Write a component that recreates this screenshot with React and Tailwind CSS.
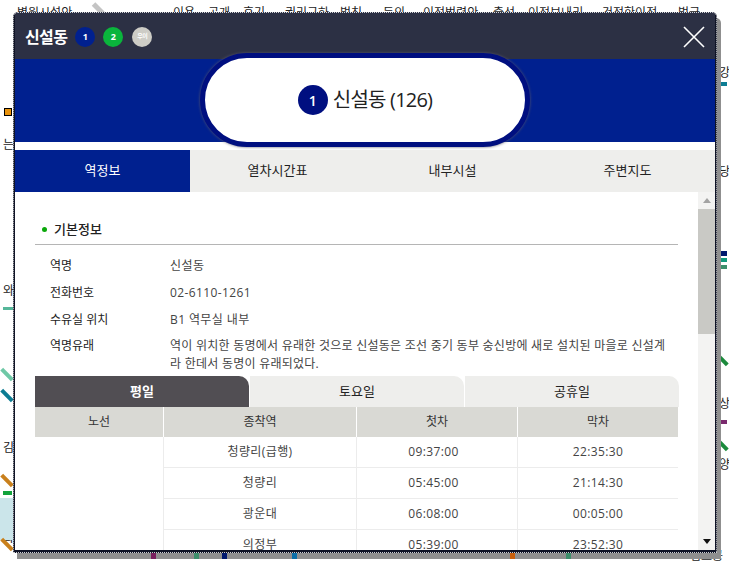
const infoRows = [
  { label: '역명', value: '신설동' },
  { label: '전화번호', value: '02-6110-1261' },
  { label: '수유실 위치', value: 'B1 역무실 내부' },
];

const schedule = [
  { dest: '청량리(급행)', first: '09:37:00', last: '22:35:30' },
  { dest: '청량리', first: '05:45:00', last: '21:14:30' },
  { dest: '광운대', first: '06:08:00', last: '00:05:00' },
  { dest: '의정부', first: '05:39:00', last: '23:52:30' },
];

const mainTabs = ['역정보', '열차시간표', '내부시설', '주변지도'];

// labels and line stubs of the subway map that sits behind the popup
const mapLabels = [
  { text: '병원시설안', x: 17, y: 6 },
  { text: '이용', x: 173, y: 6 },
  { text: '공개', x: 208, y: 6 },
  { text: '후기', x: 243, y: 6 },
  { text: '권리구하', x: 285, y: 6 },
  { text: '벌칙', x: 340, y: 6 },
  { text: '등의', x: 383, y: 6 },
  { text: '이전법령안', x: 423, y: 6 },
  { text: '출석', x: 493, y: 6 },
  { text: '이전보내리', x: 528, y: 6 },
  { text: '건전한이전', x: 602, y: 6 },
  { text: '벌금', x: 678, y: 6 },
  { text: '는', x: 3, y: 138 },
  { text: '와', x: 3, y: 284 },
  { text: '김', x: 3, y: 441 },
  { text: '정', x: 3, y: 503 },
  { text: '화', x: 3, y: 531 },
  { text: '강', x: 719, y: 66 },
  { text: '당', x: 719, y: 165 },
  { text: '상', x: 719, y: 397 },
  { text: '양', x: 719, y: 458 },
  { text: '답십리', x: 255, y: 547 },
  { text: '김포공', x: 690, y: 549 },
];

const mapStubs = [
  { x: 3, y: 307, w: 10, h: 3, c: '#56b79a' },
  { x: 3, y: 491, w: 9, h: 4, c: '#12a33c' },
  { x: 0, y: 498, w: 13, h: 42, c: '#cbe5ea' },
  { x: 719, y: 82, w: 8, h: 4, c: '#0c7c93' },
  { x: 719, y: 251, w: 8, h: 5, c: '#00186e' },
  { x: 719, y: 258, w: 8, h: 4, c: '#129a7c' },
  { x: 719, y: 265, w: 8, h: 4, c: '#3d8f6c' },
  { x: 719, y: 420, w: 8, h: 4, c: '#7a2a6e' },
];

const bottomStubs = [
  { x: 151, c: '#7a1f5f' },
  { x: 194, c: '#3d8f6c' },
  { x: 222, c: '#00186e' },
  { x: 292, c: '#0c6fa8' },
  { x: 510, c: '#c9600c' },
  { x: 566, c: '#3d8f6c' },
];

const mapDiagonals = [
  { x: 5, y: 367, c: '#6fc8a6' },
  { x: 5, y: 388, c: '#0c7c93' },
  { x: 5, y: 473, c: '#c9801c' },
  { x: 5, y: 537, c: '#c9801c' },
  { x: 720, y: 352, c: '#1c8a3c' },
  { x: 720, y: 437, c: '#1c8a3c' },
];

function LineBadge({ className, children }) {
  return (
    <span className={`flex h-5 w-5 items-center justify-center rounded-full text-white font-bold ${className}`}>
      {children}
    </span>
  );
}

function Scrollbar() {
  return (
    <div className="flex w-[17px] shrink-0 flex-col items-center bg-[#f3f3f2]">
      <div className="flex h-[17px] w-full items-center justify-center">
        <div className="h-0 w-0 border-x-[4px] border-b-[5px] border-x-transparent border-b-[#a3a3a3]" />
      </div>
      <div className="h-[125px] w-full bg-[#c9c9c5]" />
      <div className="flex-1" />
      <div className="flex h-[17px] w-full items-center justify-center">
        <div className="h-0 w-0 border-x-[4px] border-t-[5px] border-x-transparent border-t-[#111]" />
      </div>
    </div>
  );
}

function MapBehind() {
  return (
    <>
      {mapLabels.map((l) => (
        <span
          key={l.text}
          className="absolute whitespace-nowrap text-[12px] leading-[14px] text-[#222]"
          style={{ left: l.x, top: l.y }}
        >
          {l.text}
        </span>
      ))}
      {mapStubs.map((s) => (
        <div
          key={`${s.x}-${s.y}`}
          className="absolute"
          style={{ left: s.x, top: s.y, width: s.w, height: s.h, background: s.c }}
        />
      ))}
      {mapDiagonals.map((d) => (
        <div
          key={`${d.x}-${d.y}`}
          className="absolute h-[15px] w-[4px] -rotate-45"
          style={{ left: d.x, top: d.y, background: d.c }}
        />
      ))}
      <div className="absolute left-[4px] top-[108px] h-[8px] w-[8px] border border-black bg-[#e8920c]" />
      <div className="absolute left-[96px] top-[2px] h-[14px] w-[5px] -rotate-45 bg-[#c4c4c4]" />
    </>
  );
}

export default function App() {
  return (
    <div className="relative h-[565px] w-[729px] overflow-hidden bg-white font-['Open_Sans','Noto_Sans_CJK_KR',sans-serif] text-[#333]">
      <MapBehind />

      {/* popup */}
      <div className="absolute left-[13px] top-[12px] flex h-[541px] w-[704px] flex-col rounded-t-[5px] border-x-2 border-t-2 border-b-[3px] border-x-[#0f1325] border-t-[#2c3044] border-b-[#0f1325] bg-white shadow-[4px_6px_0_#8f8f8f] outline-1 -outline-offset-1 outline-dotted outline-white/80">
        <header className="flex h-[45px] shrink-0 items-center bg-[#2c3044] pl-[10px] pr-[10px]">
          <h2 className="text-[16px] font-bold tracking-[-0.6px] text-white">신설동</h2>
          <div className="ml-2 flex items-center gap-[8px]">
            <LineBadge className="bg-[#00208f] text-[9px]">1</LineBadge>
            <LineBadge className="bg-[#0ab53c] text-[9px]">2</LineBadge>
            <LineBadge className="ml-[1px] bg-[#cdccc6] text-[6px] tracking-[-0.5px]">우이</LineBadge>
          </div>
          <svg className="ml-auto" width="22" height="22" viewBox="0 0 22 22" fill="none" stroke="#ffffff" strokeWidth="1.6">
            <path d="M1 1L21 21M21 1L1 21" />
          </svg>
        </header>

        <div className="relative flex h-[83px] shrink-0 justify-center bg-[#00208f]">
          <div className="absolute top-[-6px] flex h-[94px] w-[330px] items-center justify-center gap-[5px] rounded-full border-[5px] border-[#000f80] bg-white shadow-[0_0_3px_#5a5a6a]">
            <span className="flex h-[30px] w-[30px] items-center justify-center rounded-full bg-[#000f80] text-[14px] font-semibold text-white">
              1
            </span>
            <span className="text-[20px] tracking-[-0.8px] text-[#222]">신설동 (126)</span>
          </div>
        </div>

        <nav className="mt-2 flex h-[42px] shrink-0 bg-[#eeeeec]">
          {mainTabs.map((tab, i) => (
            <div
              key={tab}
              className={`flex flex-1 items-center justify-center text-[13px] ${
                i === 0 ? 'bg-[#00208f] text-white' : 'text-[#222]'
              }`}
            >
              {tab}
            </div>
          ))}
        </nav>

        <div className="flex min-h-0 flex-1">
          <div className="min-w-0 flex-1 overflow-hidden pl-[20px] pr-[20px] pt-[27px]">
            <div className="flex h-[26px] items-center border-b border-[#b5b5b5] pb-[4px]">
              <span className="ml-[7px] h-[5px] w-[5px] rounded-full bg-[#0aa80a]" />
              <span className="ml-[7px] text-[13px] font-medium text-[#222]">기본정보</span>
            </div>

            <dl className="mt-[7px] pl-[15px] text-[12px]">
              {infoRows.map((row) => (
                <div key={row.label} className="flex h-[27px] items-center">
                  <dt className="w-[120px] shrink-0 text-[#222]">{row.label}</dt>
                  <dd className="tracking-[0.4px] text-[#444]">{row.value}</dd>
                </div>
              ))}
              <div className="flex pt-[4px]">
                <dt className="w-[120px] shrink-0 text-[#222]">역명유래</dt>
                <dd className="pr-[8px] leading-[18px] tracking-[0.25px] break-all text-[#444]">
                  역이 위치한 동명에서 유래한 것으로 신설동은 조선 중기 동부 숭신방에 새로 설치된 마을로 신설계라 한데서 동명이 유래되었다.
                </dd>
              </div>
            </dl>

            <div className="-mr-[1px] mt-[3px] flex h-[31px] gap-[1px]">
              <div className="flex flex-1 items-center justify-center rounded-tr-[10px] bg-[#514e53] text-[13px] font-semibold text-white">
                평일
              </div>
              <div className="flex flex-1 items-center justify-center rounded-tr-[10px] bg-[#eeeeec] text-[13px] text-[#222]">
                토요일
              </div>
              <div className="flex flex-1 items-center justify-center rounded-tr-[10px] bg-[#eeeeec] text-[13px] text-[#222]">
                공휴일
              </div>
            </div>

            <div className="grid grid-cols-[129px_193px_161px_160px] text-center text-[12px]">
              <div className="flex h-[30px] items-center justify-center border-r border-white bg-[#d9d9d4] text-[#333]">노선</div>
              <div className="flex h-[30px] items-center justify-center border-r border-white bg-[#d9d9d4] text-[#333]">종착역</div>
              <div className="flex h-[30px] items-center justify-center border-r border-white bg-[#d9d9d4] text-[#333]">첫차</div>
              <div className="flex h-[30px] items-center justify-center bg-[#d9d9d4] text-[#333]">막차</div>
              <div className="row-span-4 border-r border-[#ececec]" />
              {schedule.map((row) => (
                <div key={row.dest} className="col-span-3 grid h-[31px] grid-cols-[193px_161px_160px] border-b border-[#ececec] tracking-[0.4px] text-[#444]">
                  <div className="flex items-center justify-center border-r border-[#ececec]">{row.dest}</div>
                  <div className="flex items-center justify-center border-r border-[#ececec] pr-[7px]">{row.first}</div>
                  <div className="flex items-center justify-center">{row.last}</div>
                </div>
              ))}
            </div>
          </div>
          <Scrollbar />
        </div>
      </div>

      {bottomStubs.map((s) => (
        <div key={s.x} className="absolute top-[553px] h-[6px] w-[5px]" style={{ left: s.x, background: s.c }} />
      ))}
    </div>
  );
}
